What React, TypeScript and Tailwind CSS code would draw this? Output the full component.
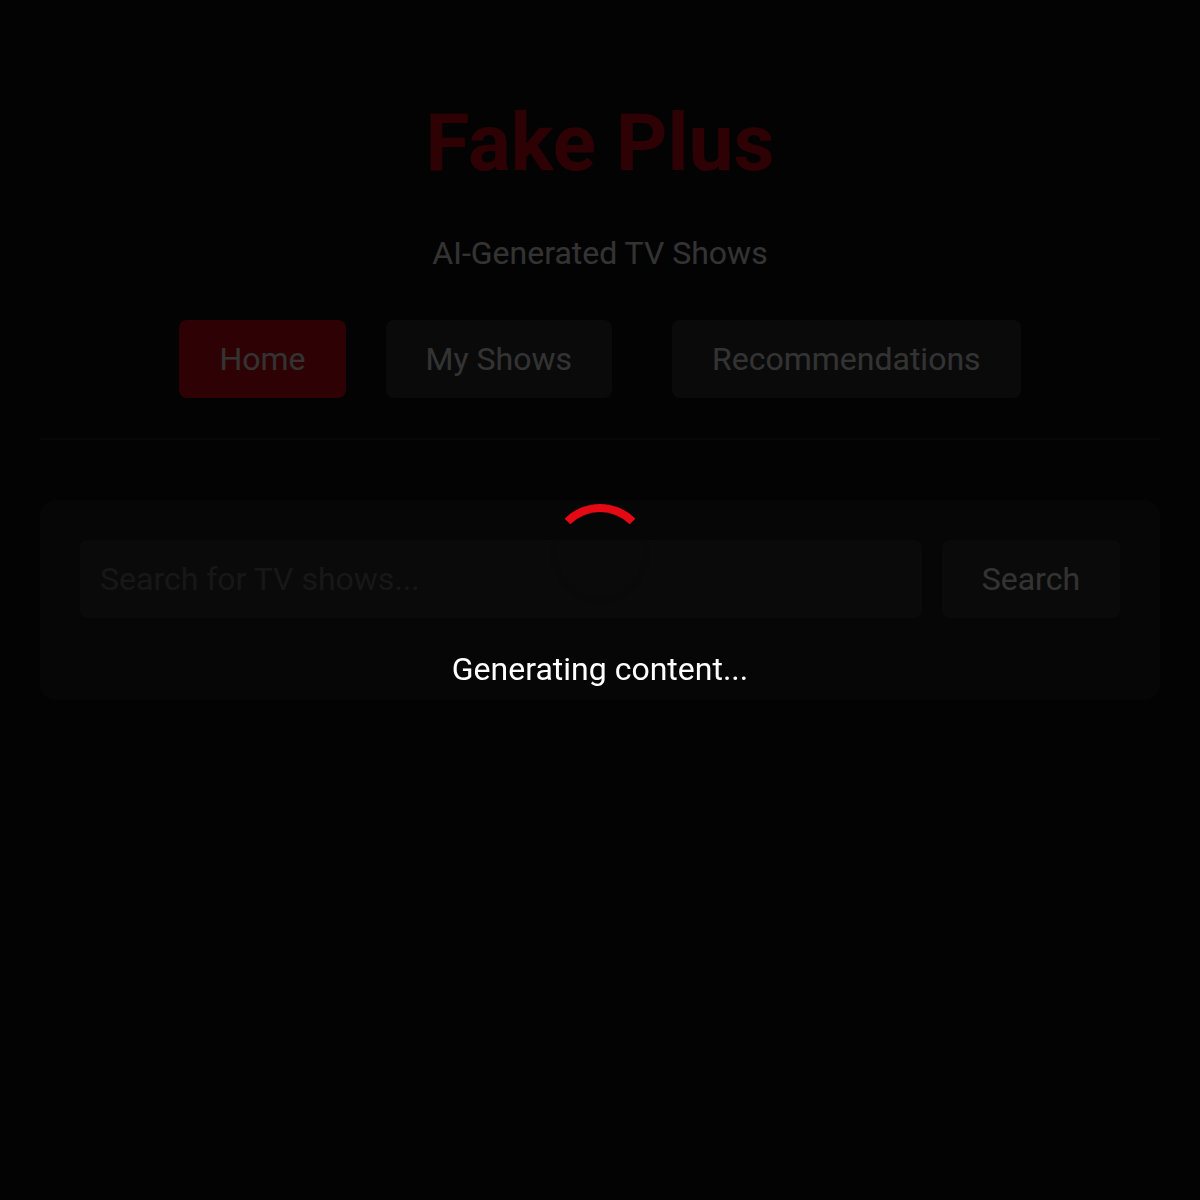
import { useState } from 'react';
import type { FormEvent } from 'react';

interface NavItem {
  id: string;
  label: string;
  className: string;
}

const navItems: NavItem[] = [
  { id: 'home', label: 'Home', className: '' },
  { id: 'my-shows', label: 'My Shows', className: 'ml-10' },
  { id: 'recommendations', label: 'Recommendations', className: 'ml-[60px]' },
];

function LoadingOverlay() {
  return (
    <div
      role="status"
      className="fixed inset-0 z-50 flex flex-col items-center justify-center bg-black/80"
    >
      <div className="mb-[38px] size-[100px] rounded-full border-8 border-black/10 border-t-[#e50914]" />
      <p className="leading-[54px] text-white">Generating content...</p>
    </div>
  );
}

export default function App() {
  const [activeTab, setActiveTab] = useState('home');
  const [query, setQuery] = useState('');
  const [loading] = useState(true);

  const handleSearch = (e: FormEvent) => {
    e.preventDefault();
  };

  return (
    <div className="min-h-screen bg-[#0f0f0f] p-10 font-[Roboto,sans-serif] text-[32px] text-white">
      <header className="mb-[60px] border-b-2 border-[#292929] py-10 text-center">
        <h1 className="mb-5 text-[80px] leading-[126px] font-bold text-[#e50914]">Fake Plus</h1>
        <p className="leading-[54px]">AI-Generated TV Shows</p>
        <nav className="mt-10 flex justify-center">
          {navItems.map((item) => (
            <button
              key={item.id}
              type="button"
              onClick={() => setActiveTab(item.id)}
              className={`rounded-lg px-10 py-5 leading-[38px] ${item.className} ${
                activeTab === item.id ? 'bg-[#e50914]' : 'bg-[#333]'
              }`}
            >
              {item.label}
            </button>
          ))}
        </nav>
      </header>

      {/* Search */}
      <main className="rounded-2xl bg-[#222] p-10">
        <form onSubmit={handleSearch} className="mb-[42px] flex gap-5">
          <input
            type="text"
            aria-label="Search for TV shows"
            placeholder="Search for TV shows..."
            value={query}
            onChange={(e) => setQuery(e.target.value)}
            className="h-[78px] min-w-0 flex-1 rounded-lg bg-[#333] px-5 placeholder:text-[#757575]"
          />
          <button type="submit" className="rounded-lg bg-[#333] px-10 py-5 leading-[38px]">
            Search
          </button>
        </form>
      </main>

      {loading && <LoadingOverlay />}
    </div>
  );
}
